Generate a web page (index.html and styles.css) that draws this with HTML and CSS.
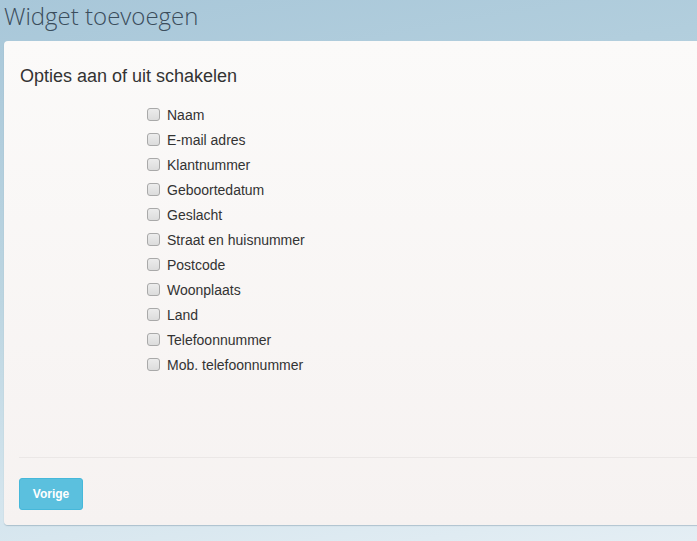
FILE: index.html
```html
<!DOCTYPE html>
<html lang="nl">
<head>
<meta charset="utf-8">
<title>Widget toevoegen</title>
<link rel="stylesheet" href="styles.css">
</head>
<body>
<h1 class="page-title">Widget toevoegen</h1>
<div class="card">
  <div class="card-body">
    <h2 class="section-title">Opties aan of uit schakelen</h2>
    <ul class="options">
      <li><label><input type="checkbox"><span>Naam</span></label></li>
      <li><label><input type="checkbox"><span>E-mail adres</span></label></li>
      <li><label><input type="checkbox"><span>Klantnummer</span></label></li>
      <li><label><input type="checkbox"><span>Geboortedatum</span></label></li>
      <li><label><input type="checkbox"><span>Geslacht</span></label></li>
      <li><label><input type="checkbox"><span>Straat en huisnummer</span></label></li>
      <li><label><input type="checkbox"><span>Postcode</span></label></li>
      <li><label><input type="checkbox"><span>Woonplaats</span></label></li>
      <li><label><input type="checkbox"><span>Land</span></label></li>
      <li><label><input type="checkbox"><span>Telefoonnummer</span></label></li>
      <li><label><input type="checkbox"><span>Mob. telefoonnummer</span></label></li>
    </ul>
  </div>
  <div class="card-footer">
    <button class="btn-info" type="button">Vorige</button>
  </div>
</div>
</body>
</html>
```

FILE: styles.css
```css
html, body {
  margin: 0;
  padding: 0;
  height: 100%;
  overflow: hidden;
}
body {
  background: linear-gradient(170deg, #a8c7d9 0%, #bcd5e1 45%, #d3e4ed 75%, #e4eef4 100%);
  font-family: "Liberation Sans", Arial, sans-serif;
  color: #333;
}
.page-title {
  margin: 0;
  height: 41px;
  padding-left: 4px;
  font-family: "Open Sans", sans-serif;
  font-weight: 300;
  font-size: 24px;
  line-height: 32px;
  color: #3b4d5c;
  white-space: nowrap;
}
.card {
  margin-left: 4px;
  width: 720px;
  height: 484px;
  box-sizing: border-box;
  background: linear-gradient(180deg, #fbfaf9 0%, #f6f2f1 100%);
  border-radius: 4px;
  box-shadow: 0 1px 1px rgba(90, 120, 140, 0.35);
  display: flex;
  flex-direction: column;
}
.card-body {
  flex: 1;
  padding: 25px 15px 0 15px;
}
.section-title {
  margin: 0 0 16px 1px;
  font-size: 18px;
  font-weight: normal;
  line-height: 20px;
  color: #333;
}
.options {
  list-style: none;
  margin: 0;
  padding: 0 0 0 127px;
}
.options li {
  height: 25px;
}
.options label {
  display: flex;
  align-items: center;
  height: 25px;
  font-size: 14px;
  color: #333;
}
.options input {
  -webkit-appearance: none;
  appearance: none;
  box-sizing: border-box;
  margin: 0 7px 0 1px;
  width: 13px;
  height: 13px;
  border: 1px solid #a9a9a9;
  border-radius: 3px;
  background: linear-gradient(180deg, #ececec 0%, #dcdcdc 100%);
}
.card-footer {
  margin: 0 0 0 15px;
  border-top: 1px solid #ebe7e6;
  padding: 20px 0 15px 0;
}
.btn-info {
  display: block;
  width: 64px;
  height: 32px;
  background: #5bc0de;
  border: 1px solid #46b8da;
  border-radius: 3px;
  color: #fff;
  font-family: "Liberation Sans", Arial, sans-serif;
  font-weight: bold;
  font-size: 12px;
  padding: 0;
}
```
